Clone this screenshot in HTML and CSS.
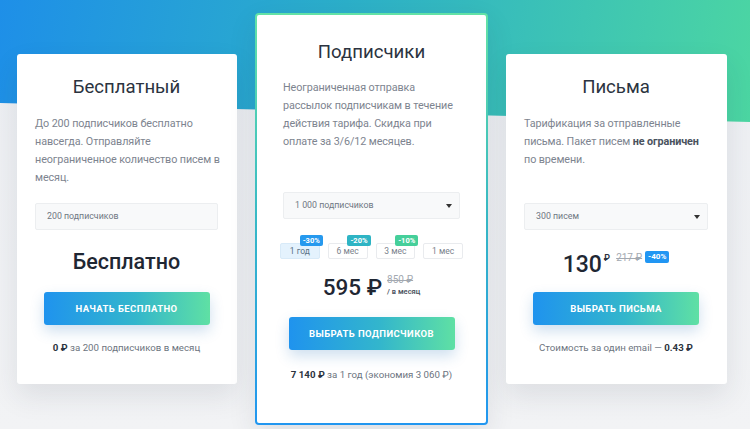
FILE: index.html
```html
<!DOCTYPE html>
<html lang="ru">
<head>
<meta charset="utf-8">
<title>Тарифы</title>
<link rel="stylesheet" href="styles.css">
</head>
<body>
<div class="page">
  <div class="cards">
    <section class="card">
      <h2 class="card-title">Бесплатный</h2>
      <p class="card-desc">До 200 подписчиков бесплатно<br>навсегда. Отправляйте<br>неограниченное количество писем в<br>месяц.</p>
      <div class="field">200 подписчиков</div>
      <div class="price-block"><span class="price-free">Бесплатно</span></div>
      <a class="btn" href="#">Начать бесплатно</a>
      <p class="note"><b>0 ₽</b> за 200 подписчиков в месяц</p>
    </section>

    <section class="card card-featured">
      <h2 class="card-title">Подписчики</h2>
      <p class="card-desc">Неограниченная отправка<br>рассылок подписчикам в течение<br>действия тарифа. Скидка при<br>оплате за 3/6/12 месяцев.</p>
      <div class="field field-select">1 000 подписчиков<span class="caret"></span></div>
      <div class="periods">
        <span class="period active">1 год<span class="badge badge-blue">-30%</span></span>
        <span class="period">6 мес<span class="badge badge-teal">-20%</span></span>
        <span class="period">3 мес<span class="badge badge-green">-10%</span></span>
        <span class="period">1 мес</span>
      </div>
      <div class="price-row">
        <span class="price-main">595 ₽</span>
        <span class="price-side">
          <s class="old">850 ₽</s>
          <span class="per">/ в месяц</span>
        </span>
      </div>
      <a class="btn" href="#">Выбрать подписчиков</a>
      <p class="note"><b>7 140 ₽</b> за 1 год (экономия 3 060 ₽)</p>
    </section>

    <section class="card">
      <h2 class="card-title">Письма</h2>
      <p class="card-desc">Тарификация за отправленные<br>письма. Пакет писем <b>не ограничен</b><br>по времени.</p>
      <div class="field field-select">300 писем<span class="caret"></span></div>
      <div class="price-block">
        <div class="price-group">
          <span class="price-main">130</span><span class="cur">₽</span>
          <s class="old old-top">217 ₽</s>
          <span class="badge-inline">-40%</span>
        </div>
      </div>
      <a class="btn" href="#">Выбрать письма</a>
      <p class="note">Стоимость за один email — <b>0.43 ₽</b></p>
    </section>
  </div>
</div>
</body>
</html>
```

FILE: styles.css
```css
* { box-sizing: border-box; }
html, body { margin: 0; padding: 0; }
body {
  font-family: Roboto, "Noto Sans", sans-serif;
  color: #2b3340;
  background: #eff0f3;
}
.page {
  position: relative;
  width: 750px;
  height: 429px;
  overflow: hidden;
  background: linear-gradient(to bottom, #eceef2 0%, #f2f3f5 100%);
}
.page::before {
  content: "";
  position: absolute;
  left: 0; top: 0; right: 0;
  height: 124px;
  background: linear-gradient(100deg, #1e8fe8 0%, #2cafc9 45%, #4cd6a2 100%);
  clip-path: polygon(0 0, 100% 0, 100% 122px, 0 103px);
}
.cards {
  position: relative;
  display: flex;
  align-items: center;
  gap: 18px;
  height: 429px;
  padding: 9px 23px 0 17px;
}
.card {
  width: 220px;
  background: #fff;
  border-radius: 3px;
  padding: 21px 19px 28px 18px;
  box-shadow: 0 12px 28px rgba(40, 50, 70, 0.10);
  display: flex;
  flex-direction: column;
}
.card:last-child { width: 221px; }
.card-title {
  margin: 0;
  font-size: 18.6px;
  line-height: 24px;
  font-weight: 400;
  text-align: center;
  color: #2b3340;
}
.card-desc {
  margin: 16px 0 16px;
  min-height: 72px;
  font-size: 10.8px;
  letter-spacing: -0.1px;
  line-height: 18px;
  color: #7d848f;
  white-space: nowrap;
}
.card-desc b { color: #4a525e; font-weight: 700; }
.field {
  position: relative;
  height: 27px;
  line-height: 25px;
  padding: 0 11px;
  border: 1px solid #eceef0;
  background: #f8f9fa;
  border-radius: 2px;
  font-size: 8.8px;
  color: #6f7782;
}
.caret {
  position: absolute;
  right: 7px;
  top: 11px;
  width: 0; height: 0;
  border-left: 3.5px solid transparent;
  border-right: 3.5px solid transparent;
  border-top: 4px solid #333;
}
.price-block {
  height: 62px;
  display: flex;
  align-items: center;
  justify-content: center;
}
.price-free {
  font-size: 21.5px;
  font-weight: 500;
  color: #1f2733;
}
.price-group {
  display: flex;
  align-items: flex-start;
  margin-top: 8px;
}
.price-main {
  font-size: 23px;
  font-weight: 500;
  color: #1f2733;
  line-height: 26px;
}
.cur {
  margin: 1px 0 0 2px;
  font-size: 9px;
  line-height: 10px;
  font-weight: 600;
  color: #2b3340;
}
.old {
  color: #a3a9b1;
  font-size: 10px;
  line-height: 12px;
  text-decoration: line-through;
}
.old-top { margin: 0 0 0 6px; }
.badge-inline {
  margin: -1px 0 0 3px;
  background: #2196f3;
  color: #fff;
  font-size: 8px;
  font-weight: 700;
  padding: 1px 3px;
  border-radius: 2px;
  line-height: 10px;
}
.btn {
  display: block;
  align-self: center;
  width: 166px;
  height: 33px;
  line-height: 33px;
  text-align: center;
  text-decoration: none;
  text-transform: uppercase;
  font-size: 9.5px;
  font-weight: 700;
  letter-spacing: 0.4px;
  color: #fff;
  border-radius: 3px;
  background: linear-gradient(to right, #1f93ee 0%, #33b6cc 55%, #5fe0a4 100%);
  box-shadow: 0 6px 14px rgba(30, 110, 180, 0.22);
}
.note {
  margin: 15px 0 0;
  text-align: center;
  font-size: 9.7px;
  line-height: 16px;
  color: #6c7480;
  white-space: nowrap;
}
.note b { color: #2b3340; font-weight: 700; }

/* featured */
.card-featured {
  width: 233px;
  padding: 25px 26px 40px 26px;
  border: 2px solid transparent;
  border-radius: 4px;
  background:
    linear-gradient(#fff, #fff) padding-box,
    linear-gradient(to bottom, #63e2a6 0%, #37b9c6 50%, #2196f0 100%) border-box;
  box-shadow: 0 10px 28px rgba(40, 50, 70, 0.10);
}
.card-featured .card-desc {
  margin: 15px 0 41px;
}
.periods {
  display: grid;
  grid-template-columns: repeat(4, 1fr);
  gap: 8px;
  margin: 24px -3px 0;
}
.period {
  position: relative;
  height: 16px;
  line-height: 14px;
  text-align: center;
  font-size: 8.5px;
  color: #7a828c;
  background: #fff;
  border: 1px solid #e9ebee;
  border-radius: 2px;
}
.period.active {
  background: #e4f2fd;
  border-color: #d8eaf8;
  color: #5a7286;
}
.badge {
  position: absolute;
  top: -9px;
  right: -4px;
  padding: 0 3px;
  height: 11px;
  line-height: 11px;
  font-size: 7.5px;
  font-weight: 700;
  color: #fff;
  border-radius: 2px;
}
.badge-blue { background: #2699ee; }
.badge-teal { background: #2eb4c4; }
.badge-green { background: #45cf9a; }
.price-row {
  margin: 13px 0 0;
  height: 30px;
  display: flex;
  align-items: center;
  justify-content: center;
  gap: 5px;
}
.price-row .price-main { font-size: 22.5px; }
.price-side {
  display: flex;
  flex-direction: column;
  line-height: 12px;
  margin-top: -2px;
}
.per {
  font-size: 7.5px;
  font-weight: 600;
  color: #4a525e;
}
.card-featured .btn { margin-top: 15px; }
.card-featured .note { margin-top: 17px; }
```
